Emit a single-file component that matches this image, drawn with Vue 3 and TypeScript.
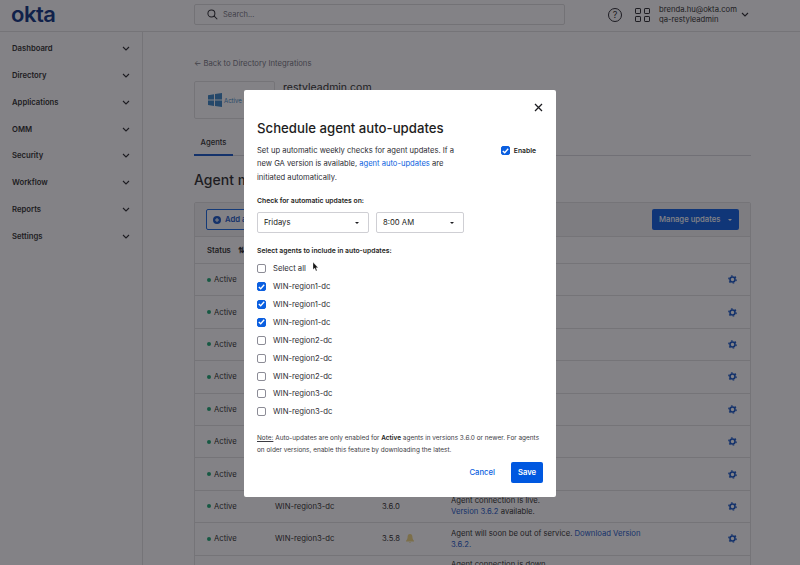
<script setup lang="ts">
const navItems = ['Dashboard', 'Directory', 'Applications', 'OMM', 'Security', 'Workflow', 'Reports', 'Settings']

const agents = [
  { name: 'WIN-region1-dc', checked: true },
  { name: 'WIN-region1-dc', checked: true },
  { name: 'WIN-region1-dc', checked: true },
  { name: 'WIN-region2-dc', checked: false },
  { name: 'WIN-region2-dc', checked: false },
  { name: 'WIN-region2-dc', checked: false },
  { name: 'WIN-region3-dc', checked: false },
  { name: 'WIN-region3-dc', checked: false }
]

// these rows sit behind the modal, only status and gear show
const coveredRows = 7
</script>

<template>
  <div class="page">
    <svg class="defs" width="0" height="0">
      <symbol id="gear" viewBox="0 0 9 9">
        <circle cx="4.500" cy="4.500" r="2.500" fill="none" stroke="#0b4fc4" stroke-width="1.600" />
        <circle cx="4.500" cy="4.500" r="3.700" fill="none" stroke="#0b4fc4" stroke-width="1.300" stroke-dasharray="1.600 2.275" />
      </symbol>
    </svg>

    <header class="topbar">
      <div class="brand">okta</div>
      <div class="search">
        <svg width="11" height="11" viewBox="0 0 12 12" fill="none" stroke="#1d1d21" stroke-width="1.1">
          <circle cx="4.8" cy="4.8" r="3.8" />
          <path d="M7.6 7.6 11.2 11.2" />
        </svg>
        <span>Search...</span>
      </div>
      <div class="help">?</div>
      <svg class="apps" width="15" height="14" viewBox="0 0 15 14" fill="none" stroke="#1d1d21" stroke-width="1">
        <rect x="0.5" y="0.5" width="5" height="5" rx="0.6" />
        <rect x="9.5" y="0.5" width="5" height="5" rx="0.6" />
        <rect x="0.5" y="8.5" width="5" height="5" rx="0.6" />
        <rect x="9.5" y="8.5" width="5" height="5" rx="0.6" />
      </svg>
      <div class="user">
        <div>brenda.hu@okta.com</div>
        <div>qa-restyleadmin</div>
      </div>
      <svg class="chev" width="8" height="5" viewBox="0 0 8 5"><path d="M1 1l3 3 3-3" /></svg>
    </header>

    <div class="body">
      <nav class="sidebar">
        <div v-for="item in navItems" :key="item" class="nav-item">
          <span>{{ item }}</span>
          <svg class="chev" width="8" height="5" viewBox="0 0 8 5"><path d="M1 1l3 3 3-3" /></svg>
        </div>
      </nav>

      <main class="content">
        <a class="back">← Back to Directory Integrations</a>
        <div class="app-head">
          <div class="logo-box">
            <svg width="14" height="14" viewBox="0 0 14 14" fill="#2f7fc1">
              <path d="M0 2.2 6 1.2V6.6H0zM7 1 14 0V6.6H7zM0 7.6H6V13L0 12zM7 7.6H14V14L7 13z" />
            </svg>
            <span>Active Directory</span>
          </div>
          <div class="app-name">restyleadmin.com</div>
        </div>
        <div class="tabs"><span class="tab">Agents</span></div>
        <h2 class="section-title">Agent management</h2>

        <section class="table">
          <div class="toolbar">
            <button class="add-btn" type="button">
              <svg width="8" height="8" viewBox="0 0 8 8">
                <circle cx="4" cy="4" r="4" fill="#0b4fc4" />
                <path d="M4 2v4M2 4h4" stroke="#fff" stroke-width="1" />
              </svg>
              Add agent
            </button>
            <button class="manage-btn" type="button">Manage updates <i class="caret light"></i></button>
          </div>
          <div class="row head">
            <span class="c-status">Status <b class="sort">⇅</b></span>
          </div>
          <div v-for="i in coveredRows" :key="i" class="row">
            <span class="c-status"><i class="dot"></i>Active</span>
            <svg class="gear" width="9" height="9"><use href="#gear" /></svg>
          </div>
          <div class="row">
            <span class="c-status"><i class="dot"></i>Active</span>
            <span class="c-name">WIN-region3-dc</span>
            <span class="c-ver">3.6.0</span>
            <span class="c-msg">Agent connection is live.<br /><a>Version 3.6.2</a> available.</span>
            <svg class="gear" width="9" height="9"><use href="#gear" /></svg>
          </div>
          <div class="row">
            <span class="c-status"><i class="dot"></i>Active</span>
            <span class="c-name">WIN-region3-dc</span>
            <span class="c-ver">3.5.8
              <svg width="8" height="9" viewBox="0 0 8 9" fill="#f0d57a">
                <path d="M4 0C2.400 0 1.600 1.200 1.600 2.800 1.600 4.800 1 5.600 0 6.800V7.600H8V6.800C7 5.600 6.400 4.800 6.400 2.800 6.400 1.200 5.600 0 4 0ZM3 8H5L4 9Z" />
              </svg>
            </span>
            <span class="c-msg">Agent will soon be out of service. <a>Download Version 3.6.2.</a></span>
            <svg class="gear" width="9" height="9"><use href="#gear" /></svg>
          </div>
          <div class="row down">
            <span class="c-status"></span>
            <span class="c-name"></span>
            <span class="c-ver"></span>
            <span class="c-msg">Agent connection is down.</span>
          </div>
        </section>
      </main>
    </div>

    <div class="overlay">
      <div class="modal">
        <button class="close" type="button" aria-label="Close">
          <svg width="9" height="9" viewBox="0 0 9 9" stroke="#1d1d21" stroke-width="1.3"><path d="M1 1l7 7M8 1 1 8" /></svg>
        </button>
        <h1>Schedule agent auto-updates</h1>
        <div class="intro">
          <p>
            Set up automatic weekly checks for agent updates. If a<br />
            new GA version is available, <a>agent auto-updates</a> are<br />
            initiated automatically.
          </p>
          <label class="enable">
            <span class="box on">
              <svg width="7" height="6" viewBox="0 0 7 6" fill="none" stroke="#fff" stroke-width="1.300"><path d="M.8 3 2.700 4.800 6.200.8" /></svg>
            </span>
            Enable
          </label>
        </div>

        <div class="label first">Check for automatic updates on:</div>
        <div class="selects">
          <div class="select day">Fridays <i class="caret"></i></div>
          <div class="select time">8:00 AM <i class="caret"></i></div>
        </div>

        <div class="label second">Select agents to include in auto-updates:</div>
        <div class="checks">
          <label class="check">
            <span class="box"></span>
            Select all
          </label>
          <label v-for="(a, i) in agents" :key="i" class="check">
            <span class="box" :class="{ on: a.checked }">
              <svg v-if="a.checked" width="7" height="6" viewBox="0 0 7 6" fill="none" stroke="#fff" stroke-width="1.300"><path d="M.8 3 2.700 4.800 6.200.8" /></svg>
            </span>
            {{ a.name }}
          </label>
        </div>

        <p class="note">
          <u>Note:</u> Auto-updates are only enabled for <b>Active</b> agents in versions 3.6.0 or newer. For agents<br />
          on older versions, enable this feature by downloading the latest.
        </p>
        <div class="actions">
          <a class="cancel">Cancel</a>
          <button class="save" type="button">Save</button>
        </div>
      </div>
      <svg class="cursor" width="6" height="10" viewBox="0 0 7 11"><path d="M0 0V8.500L2 6.800 3.500 10.200 4.800 9.600 3.400 6.300H6Z" fill="#111" stroke="#fff" stroke-width="0.400" /></svg>
    </div>
  </div>
</template>

<style>
html,
body {
  margin: 0;
  background: #fff;
}
</style>

<style scoped>
.page {
  position: relative;
  width: 800px;
  height: 565px;
  overflow: hidden;
  background: #fff;
  color: #1d1d21;
  font-family: Inter, 'Liberation Sans', sans-serif;
  font-size: 7.7px;
}

.defs {
  position: absolute;
}

.chev {
  fill: none;
  stroke: #1d1d21;
  stroke-width: 1.1;
}

.topbar {
  display: flex;
  align-items: center;
  height: 29px;
  padding-bottom: 2px;
  border-bottom: 1px solid #e1e1e1;
}

.brand {
  width: 194px;
  padding-left: 11px;
  box-sizing: border-box;
  color: #00297a;
  font-size: 22px;
  font-weight: 600;
  letter-spacing: -0.5px;
  line-height: 29px;
}

.search {
  display: flex;
  align-items: center;
  gap: 5px;
  width: 371px;
  height: 21px;
  padding-left: 12px;
  box-sizing: border-box;
  border: 1px solid #dcdcdc;
  border-radius: 2px;
  color: #6e6e78;
  font-size: 7.500px;
}

.help {
  width: 14px;
  height: 14px;
  margin-left: 43px;
  box-sizing: border-box;
  border: 1px solid #1d1d21;
  border-radius: 50%;
  font-size: 9px;
  line-height: 12px;
  text-align: center;
}

.apps {
  margin-left: 13px;
}

.user {
  margin-left: 9px;
  width: 82px;
  line-height: 10px;
}

.body {
  display: flex;
}

.sidebar {
  width: 143px;
  height: 534px;
  padding-top: 3.400px;
  box-sizing: border-box;
  border-right: 1px solid #e1e1e1;
  flex-shrink: 0;
}

.nav-item {
  display: flex;
  align-items: center;
  justify-content: space-between;
  height: 26.800px;
  padding: 0 12px;
  font-weight: 600;
}

.content {
  width: 557px;
  margin-left: 51px;
  padding-top: 26px;
  flex-shrink: 0;
}

.back {
  display: block;
  color: #6e6e78;
  line-height: 11px;
}

.app-head {
  display: flex;
  margin-top: 12px;
}

.logo-box {
  display: flex;
  align-items: center;
  gap: 2px;
  width: 81px;
  height: 38px;
  padding-left: 13px;
  box-sizing: border-box;
  border: 1px solid #e1e1e1;
  border-radius: 2px;
  color: #2f7fc1;
  font-size: 6px;
  white-space: nowrap;
  overflow: hidden;
}

.app-name {
  margin-left: 8px;
  font-size: 10.500px;
  line-height: 13px;
}

.tabs {
  display: flex;
  align-items: flex-end;
  height: 36px;
  border-bottom: 1px solid #d7d7dc;
}

.tab {
  width: 39px;
  height: 23px;
  margin-bottom: -1px;
  box-sizing: border-box;
  border-bottom: 2px solid #0b4fc4;
  font-weight: 500;
  line-height: 20px;
  text-align: center;
}

.section-title {
  margin: 15px 0 13px;
  font-size: 14px;
  font-weight: 500;
  line-height: 18px;
}

.table {
  border: 1px solid #e1e1e1;
  border-radius: 2px;
}

.toolbar {
  display: flex;
  align-items: center;
  justify-content: space-between;
  height: 33px;
  padding: 0 11px;
  background: #f4f4f4;
  border-bottom: 1px solid #e1e1e1;
}

.add-btn {
  display: flex;
  align-items: center;
  gap: 4px;
  width: 80px;
  height: 21px;
  padding: 0 6px;
  background: #fff;
  border: 1px solid #0b5fe0;
  border-radius: 2px;
  color: #0b4fc4;
  font: 600 7.700px Inter, sans-serif;
}

.manage-btn {
  display: flex;
  align-items: center;
  justify-content: space-between;
  width: 87px;
  height: 21px;
  padding: 0 7px;
  background: #0058e0;
  border: none;
  border-radius: 2px;
  color: #fff;
  font: 500 7.700px Inter, sans-serif;
  white-space: nowrap;
}

.row {
  display: flex;
  align-items: center;
  height: 31.400px;
  padding-left: 12px;
  border-bottom: 1px solid #e1e1e1;
  line-height: 11px;
}

.row.head {
  height: 26px;
  font-weight: 600;
}

.row.down {
  align-items: flex-start;
  padding-top: 3px;
}

.c-status {
  display: flex;
  align-items: center;
  width: 68px;
  flex-shrink: 0;
}

.sort {
  margin-left: 7px;
  font-size: 8px;
}

.dot {
  width: 4px;
  height: 4px;
  margin-right: 3px;
  border-radius: 50%;
  background: #0fa36b;
}

.c-name {
  width: 107px;
  flex-shrink: 0;
}

.c-ver {
  display: flex;
  align-items: center;
  gap: 6px;
  width: 69px;
  flex-shrink: 0;
}

.c-msg {
  width: 200px;
}

.c-msg a {
  color: #0b4fc4;
}

.gear {
  margin-left: auto;
  margin-right: 13px;
}

.overlay {
  position: absolute;
  inset: 0;
  display: flex;
  justify-content: center;
  align-items: flex-start;
  padding-top: 90px;
  box-sizing: border-box;
  background: rgba(30, 27, 35, 0.55);
}

.modal {
  position: relative;
  width: 312px;
  height: 407px;
  padding: 0 13px;
  box-sizing: border-box;
  background: #fff;
  border-radius: 2px;
}

.close {
  position: absolute;
  top: 13px;
  right: 13px;
  display: flex;
  padding: 0;
  background: none;
  border: none;
}

h1 {
  margin: 0;
  padding-top: 29px;
  font-size: 13.200px;
  font-weight: 500;
  line-height: 18px;
}

.intro {
  display: flex;
  justify-content: space-between;
  margin-top: 7px;
  font-size: 7.600px;
  line-height: 13.400px;
}

.intro p {
  margin: 0;
  color: #2d2d33;
  white-space: nowrap;
}

.intro a {
  color: #0b5fe0;
}

.enable {
  display: flex;
  align-items: center;
  gap: 4px;
  height: 13px;
  margin-right: 7px;
  font-size: 6.800px;
  font-weight: 600;
}

.box {
  display: flex;
  align-items: center;
  justify-content: center;
  width: 9px;
  height: 9px;
  box-sizing: border-box;
  border: 1px solid #8c8c96;
  border-radius: 2px;
  flex-shrink: 0;
}

.box.on {
  background: #0b5fe0;
  border-color: #0b5fe0;
}

.label {
  font-size: 6.800px;
  font-weight: 600;
  line-height: 10px;
}

.label.first {
  margin-top: 12px;
}

.label.second {
  margin-top: 13px;
}

.selects {
  display: flex;
  gap: 7px;
  margin-top: 6px;
}

.select {
  display: flex;
  align-items: center;
  justify-content: space-between;
  height: 21px;
  padding: 0 9px 0 6px;
  box-sizing: border-box;
  border: 1px solid #cfcfd4;
  border-radius: 2px;
}

.select.day {
  width: 112px;
}

.select.time {
  width: 88px;
}

.caret {
  width: 0;
  height: 0;
  border-left: 2px solid transparent;
  border-right: 2px solid transparent;
  border-top: 2.500px solid #1d1d21;
}

.caret.light {
  border-top-color: #fff;
}

.checks {
  margin-top: 3.500px;
}

.check {
  display: flex;
  align-items: center;
  gap: 7px;
  height: 17.900px;
  color: #2d2d33;
}

.note {
  margin: 11.500px 0 0;
  font-size: 6.450px;
  line-height: 12px;
  color: #3c3c44;
  white-space: nowrap;
}

.note b {
  font-weight: 600;
  color: #1d1d21;
}

.actions {
  display: flex;
  align-items: center;
  justify-content: flex-end;
  gap: 16px;
  margin-top: 6px;
}

.cancel {
  color: #0b5fe0;
  font-weight: 500;
}

.save {
  width: 32px;
  height: 21px;
  padding: 0;
  background: #0058e0;
  border: none;
  border-radius: 2px;
  color: #fff;
  font: 600 7.700px Inter, sans-serif;
}

.cursor {
  position: absolute;
  left: 313px;
  top: 262px;
}
</style>
